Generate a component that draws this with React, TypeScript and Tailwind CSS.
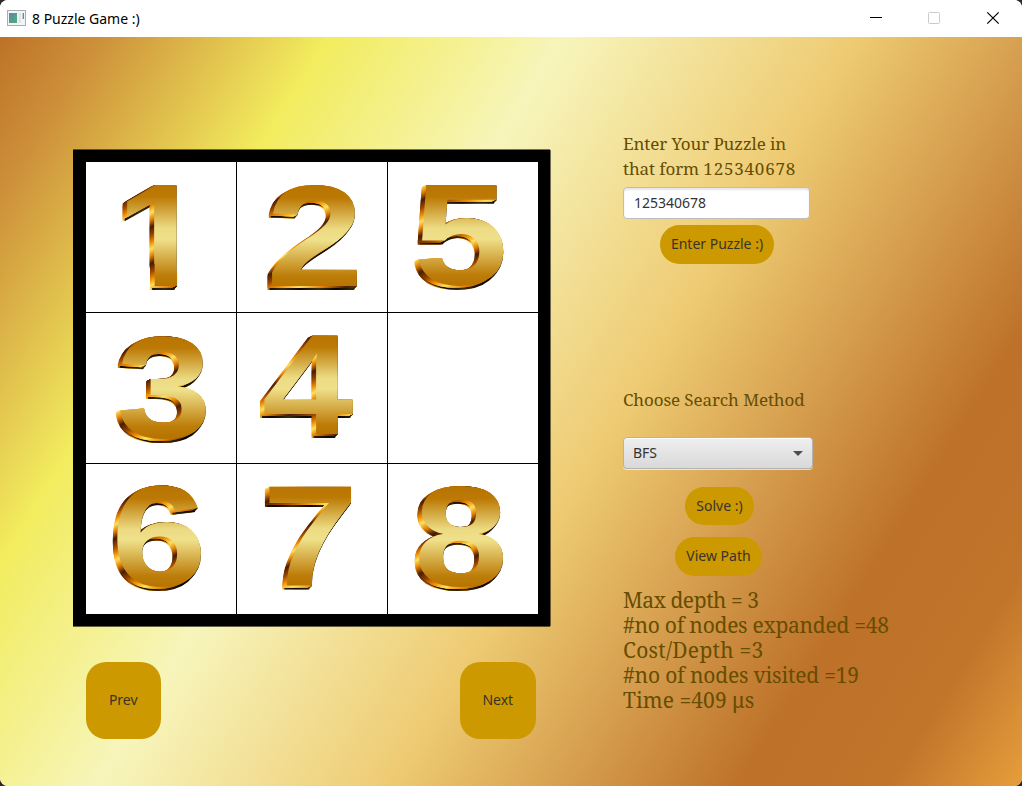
import type { ReactNode } from "react";

type Digit = { ch: string; x: number; y: number; sx: number; sy: number };

const tiles: (Digit | null)[] = [
  { ch: "1", x: 30, y: 123.7, sx: 1.12, sy: 1 },
  { ch: "2", x: 29, y: 124, sx: 1.205, sy: 0.985 },
  { ch: "5", x: 25.5, y: 122.7, sx: 1.165, sy: 0.985 },
  { ch: "3", x: 30.2, y: 123.5, sx: 1.18, sy: 0.995 },
  { ch: "4", x: 25, y: 121.2, sx: 1.13, sy: 0.98 },
  null,
  { ch: "6", x: 25, y: 121.7, sx: 1.185, sy: 0.978 },
  { ch: "7", x: 25, y: 121.2, sx: 1.19, sy: 0.985 },
  { ch: "8", x: 25.8, y: 121.8, sx: 1.165, sy: 0.978 },
];

const sideDepths = [4.5, 4, 3.5, 3, 2.5, 2, 1.5, 1, 0.5];
const baseOffsets = [
  [-2.5, 4],
  [-2, 3],
  [-1, 2],
  [0, 1],
];

function GoldDigit({ ch, x, y, sx, sy }: Digit) {
  const id = `digit-${ch}`;
  return (
    <svg
      width="150"
      height="150"
      viewBox="0 0 150 150"
      className="block overflow-visible font-['Liberation_Sans',sans-serif] font-bold"
    >
      <defs>
        <linearGradient id={`${id}-face`} gradientUnits="userSpaceOnUse" x1="0" y1="-101" x2="0" y2="0">
          <stop offset="0" stopColor="#b87400" />
          <stop offset="0.12" stopColor="#bc7a05" />
          <stop offset="0.43" stopColor="#ecdb83" />
          <stop offset="0.54" stopColor="#efe08a" />
          <stop offset="0.9" stopColor="#bd7d09" />
          <stop offset="1" stopColor="#b87400" />
        </linearGradient>
        <linearGradient id={`${id}-side`} gradientUnits="userSpaceOnUse" x1="0" y1="-84" x2="12" y2="-52" spreadMethod="repeat">
          <stop offset="0" stopColor="#4a1c00" />
          <stop offset="0.22" stopColor="#9a4600" />
          <stop offset="0.42" stopColor="#ee8c00" />
          <stop offset="0.6" stopColor="#ffe060" />
          <stop offset="0.8" stopColor="#e07f00" />
          <stop offset="1" stopColor="#4a1c00" />
        </linearGradient>
        <linearGradient id={`${id}-base`} gradientUnits="userSpaceOnUse" x1="0" y1="0" x2="24" y2="12" spreadMethod="repeat">
          <stop offset="0" stopColor="#0c0600" />
          <stop offset="0.5" stopColor="#3a2a0c" />
          <stop offset="1" stopColor="#0c0600" />
        </linearGradient>
        {ch === "1" && (
          <clipPath id="stem">
            <path d="M0-115H90V-22H54.5V5H34.5V-22H0Z" />
          </clipPath>
        )}
      </defs>
      {sideDepths.map((d) => (
        <use key={d} href={`#${id}`} x={-d} y={Math.min(d, 4)} fill={`url(#${id}-side)`} />
      ))}
      {baseOffsets.map(([dx, dy]) => (
        <use key={dy} href={`#${id}`} x={dx} y={dy} fill={`url(#${id}-base)`} />
      ))}
      {sideDepths.map((d) => (
        <use key={d} href={`#${id}`} x={-d} y={d * 0.5} fill={`url(#${id}-side)`} />
      ))}
      <g fill={`url(#${id}-face)`}>
        <g id={id}>
          <g transform={`translate(${x} ${y}) scale(${sx} ${sy})`} clipPath={ch === "1" ? "url(#stem)" : undefined}>
            <text fontSize="146">{ch}</text>
          </g>
        </g>
      </g>
    </svg>
  );
}

function GoldButton({ children, className }: { children: ReactNode; className: string }) {
  return (
    <button className={`shrink-0 rounded-[20px] bg-[#cc9900] text-center text-[14px] text-[#3a3328] ${className}`}>
      {children}
    </button>
  );
}

function TitleBar() {
  return (
    <header className="flex h-[37px] shrink-0 items-center bg-white pl-[7px]">
      <svg width="19" height="16" viewBox="0 0 19 16" className="-mt-[2px]">
        <defs>
          <linearGradient id="app" x1="0" y1="0" x2="1" y2="1">
            <stop offset="0" stopColor="#5f86a8" />
            <stop offset="1" stopColor="#4fae7c" />
          </linearGradient>
        </defs>
        <rect x="0.5" y="0.5" width="18" height="15" fill="#f3f4f6" stroke="#a9adb3" />
        <rect x="2" y="3" width="8" height="10" fill="url(#app)" />
        <rect x="11.5" y="3" width="2.5" height="10" fill="#e3e5e8" />
        <rect x="15.6" y="3" width="1.4" height="6" fill="#5b93a0" />
      </svg>
      <h1 className="ml-[6px] flex-1 text-[14px] leading-5 text-black">8 Puzzle Game :)</h1>
      <svg width="152" height="37" viewBox="0 0 152 37" fill="none">
        <path d="M0 17.5H12" stroke="#000" strokeWidth="1.1" />
        <rect x="58.5" y="12.5" width="11" height="11" rx="1" stroke="#cbcbcb" />
        <path d="M117.3 12.3l11.4 11.4M128.7 12.3l-11.4 11.4" stroke="#000" strokeWidth="1.2" />
      </svg>
    </header>
  );
}

export default function App() {
  return (
    <div className="h-[786px] w-[1022px] bg-[#2b2b2b] font-['Noto_Sans',sans-serif]">
      <div className="flex h-full flex-col overflow-hidden rounded-lg bg-white">
        <TitleBar />
        <main className="flex flex-1 items-start bg-[linear-gradient(122deg,#bd7226_0px,#cd903a_85px,#f2ec5e_277px,#f7f5bb_480px,#eecb73_726px,#bd7129_1025px,#c1752b_1150px,#e8a03c_1270px)] pl-[73px]">
          <section className="mt-[113px] w-[477px]">
            <div className="grid h-[476px] grid-cols-3 grid-rows-3 gap-px border-12 border-l-13 border-black bg-black shadow-[0_-1px_0_#00000088,1px_0_0_#00000088,0_1px_0_#00000099]">
              {tiles.map((tile, i) => (
                <div key={i} className="bg-white">
                  {tile && <GoldDigit {...tile} />}
                </div>
              ))}
            </div>
            <div className="mt-9 flex justify-between pr-[14.5px] pl-[12.5px]">
              <GoldButton className="h-[76.5px] w-[75.5px] pb-[2px]">Prev</GoldButton>
              <GoldButton className="h-[76.5px] w-[75.5px] pb-[2px]">Next</GoldButton>
            </div>
          </section>

          <section className="mt-[94px] ml-[73px] flex w-[300px] flex-col">
            <p className="w-[190px] font-['Noto_Serif','DejaVu_Serif',serif] text-[17px] leading-[25px] tracking-[-0.1px] text-[#664d00]">
              Enter Your Puzzle in
              <br />
              that form <span className="tracking-[0.8px]">125340678</span>
            </p>
            <input
              className="mt-[6px] h-8 w-[187px] rounded-[4px] border border-[#bdbdbd] bg-white px-[10px] pb-[2px] text-[14px] text-[#333333] shadow-[inset_0_2px_2px_#e6e6e6] outline-none"
              defaultValue="125340678"
            />
            <GoldButton className="mt-[5.5px] ml-[37px] h-[39.5px] w-[114px] pb-[2px]">Enter Puzzle :)</GoldButton>

            <p className="mt-[122.5px] font-['Noto_Serif','DejaVu_Serif',serif] text-[17px] leading-[25px] tracking-[-0.1px] text-[#664d00]">
              Choose Search Method
            </p>
            <div className="mt-[25.5px] flex h-8 w-[190px] items-center justify-between rounded-[4px] border border-[#b3b3b3] bg-linear-to-b from-[#efefef] to-[#d9d9d9] px-[9px] text-[14px] text-[#333333] shadow-[0_1px_0_#ffffffaa,inset_0_1px_0_#ffffff]">
              <span className="pb-[2px]">BFS</span>
              <svg width="10" height="5" viewBox="0 0 10 5">
                <path d="M0 0H10L5 5Z" fill="#4d4d4d" />
              </svg>
            </div>
            <GoldButton className="mt-[17.5px] ml-[62px] h-[38.5px] w-[69px]">Solve :)</GoldButton>
            <GoldButton className="mt-[11.5px] ml-[52px] h-[39px] w-[87px] pb-[2px]">View Path</GoldButton>

            <div className="mt-[12px] font-['Noto_Serif','DejaVu_Serif',serif] text-[21px] leading-[25px] whitespace-nowrap text-[#664d00]">
              <p className="tracking-[-0.43px]">Max depth = 3</p>
              <p className="tracking-[-0.26px]">#no of nodes expanded =48</p>
              <p className="tracking-[0.28px]">Cost/Depth =3</p>
              <p className="tracking-[-0.18px]">#no of nodes visited =19</p>
              <p className="tracking-[0.07px]">Time =409 μs</p>
            </div>
          </section>
        </main>
      </div>
    </div>
  );
}
